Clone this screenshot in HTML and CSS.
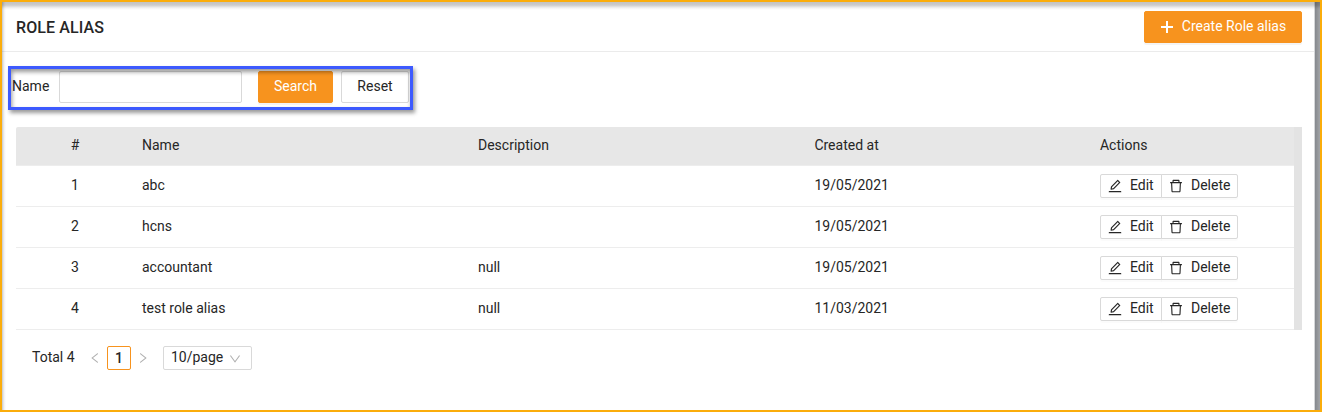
FILE: index.html
```html
<!DOCTYPE html>
<html lang="en">
<head>
<meta charset="utf-8">
<title>Role alias</title>
<link rel="stylesheet" href="styles.css">
</head>
<body>
<svg class="sprite" aria-hidden="true">
  <symbol id="edit" viewBox="64 64 896 896"><path d="M257.7 752c2 0 4-.2 6-.5L431.9 722c2-.4 3.9-1.3 5.3-2.8l423.9-423.9a9.96 9.96 0 0 0 0-14.1L694.9 114.9c-1.9-1.9-4.4-2.9-7.1-2.9s-5.2 1-7.1 2.9L256.8 538.8c-1.5 1.5-2.4 3.3-2.8 5.3l-29.5 168.2a33.5 33.5 0 0 0 9.4 29.8c6.6 6.4 14.9 9.9 23.8 9.9zm67.4-174.4L687.8 215l73.3 73.3-362.7 362.6-88.9 15.7 15.6-89zM880 836H144c-17.7 0-32 14.3-32 32v36c0 4.4 3.6 8 8 8h784c4.4 0 8-3.6 8-8v-36c0-17.7-14.3-32-32-32z"/></symbol>
  <symbol id="delete" viewBox="64 64 896 896"><path d="M360 184h-8c4.4 0 8-3.6 8-8v8h304v-8c0 4.4 3.6 8 8 8h-8v72h72v-80c0-35.3-28.7-64-64-64H352c-35.3 0-64 28.7-64 64v80h72v-72zm504 72H160c-17.7 0-32 14.3-32 32v32c0 4.4 3.6 8 8 8h60.4l24.7 523c1.6 34.1 29.8 61 63.9 61h454c34.2 0 62.3-26.8 63.9-61l24.7-523H888c4.4 0 8-3.6 8-8v-32c0-17.7-14.3-32-32-32zM731.3 840H292.7l-24.2-512h487l-24.2 512z"/></symbol>
  <symbol id="down" viewBox="64 64 896 896"><path d="M884 256h-75c-5.1 0-9.9 2.5-12.9 6.6L512 654.2 227.9 262.6c-3-4.1-7.8-6.6-12.9-6.6h-75c-6.5 0-10.3 7.4-6.5 12.7l352.6 486.1c12.8 17.6 39 17.6 51.7 0l352.6-486.1c3.9-5.3.1-12.7-6.4-12.7z"/></symbol>
  <symbol id="left" viewBox="64 64 896 896"><path d="M724 218.3V141c0-6.7-7.7-10.4-12.9-6.3L260.3 486.8a31.86 31.86 0 0 0 0 50.3l450.8 352.1c5.3 4.1 12.9.4 12.9-6.3v-77.3c0-4.9-2.3-9.6-6.1-12.6l-360-281 360-281.1c3.8-3 6.1-7.7 6.1-12.6z"/></symbol>
  <symbol id="plus" viewBox="0 0 14 14"><path d="M6 1h2v5h5v2H8v5H6V8H1V6h5z"/></symbol>
</svg>
<div class="frame">
  <header class="header">
    <h1 class="title">ROLE ALIAS</h1>
    <button class="btn primary create"><svg class="icon"><use href="#plus"/></svg>Create Role alias</button>
  </header>
  <form class="filter">
    <label class="label" for="name">Name</label>
    <input class="input" id="name" type="text">
    <button class="btn primary search" type="button">Search</button>
    <button class="btn reset" type="button">Reset</button>
  </form>
  <div class="table">
    <div class="rows">
      <div class="row head"><span class="num">#</span><span>Name</span><span>Description</span><span>Created at</span><span>Actions</span></div>
      <div class="row"><span class="num">1</span><span>abc</span><span></span><span>19/05/2021</span><div class="actions"><button class="act edit"><svg class="icon"><use href="#edit"/></svg>Edit</button><button class="act delete"><svg class="icon"><use href="#delete"/></svg>Delete</button></div></div>
      <div class="row"><span class="num">2</span><span>hcns</span><span></span><span>19/05/2021</span><div class="actions"><button class="act edit"><svg class="icon"><use href="#edit"/></svg>Edit</button><button class="act delete"><svg class="icon"><use href="#delete"/></svg>Delete</button></div></div>
      <div class="row"><span class="num">3</span><span>accountant</span><span>null</span><span>19/05/2021</span><div class="actions"><button class="act edit"><svg class="icon"><use href="#edit"/></svg>Edit</button><button class="act delete"><svg class="icon"><use href="#delete"/></svg>Delete</button></div></div>
      <div class="row"><span class="num">4</span><span>test role alias</span><span>null</span><span>11/03/2021</span><div class="actions"><button class="act edit"><svg class="icon"><use href="#edit"/></svg>Edit</button><button class="act delete"><svg class="icon"><use href="#delete"/></svg>Delete</button></div></div>
    </div>
    <div class="scrollbar"></div>
  </div>
  <footer class="pager">
    <span class="total">Total 4</span>
    <svg class="arrow"><use href="#left"/></svg>
    <span class="page">1</span>
    <svg class="arrow next"><use href="#left"/></svg>
    <div class="size"><span>10/page</span><svg class="chevron"><use href="#down"/></svg></div>
  </footer>
  <div class="edge"></div>
</div>
</body>
</html>
```
FILE: styles.css
```css
* { box-sizing: border-box; }
body {
  margin: 0;
  font: 14px/22px Roboto, "Liberation Sans", sans-serif;
  color: #262626;
  background: #fff;
}
button, input { font: inherit; color: inherit; }
.sprite { position: absolute; width: 0; height: 0; }
.frame {
  position: relative;
  height: 412px;
  border: 2px solid #fbad0b;
  overflow: hidden;
}
/* Shading along the frame and the page scrollbar lie over the content. */
.frame::after {
  content: "";
  position: absolute;
  inset: 0;
  background:
    linear-gradient(180deg, rgba(0, 0, 0, .24), rgba(0, 0, 0, .2) 3px, rgba(0, 0, 0, .05) 6px, transparent 8px),
    linear-gradient(90deg, rgba(0, 0, 0, .22), rgba(0, 0, 0, .06) 2px, transparent 4px);
  pointer-events: none;
}
.edge {
  position: absolute;
  top: 0;
  right: 0;
  bottom: 0;
  width: 6px;
  border-left: 1px solid #d5d7d9;
  background: linear-gradient(90deg, #85888d, #a2a4a7);
}
.header {
  display: flex;
  align-items: center;
  justify-content: space-between;
  height: 50px;
  padding: 0 18px 0 14px;
  border-bottom: 1px solid #ebebeb;
}
.title { margin: 2px 0 0; font-size: 16px; line-height: 24px; font-weight: 500; letter-spacing: .1px; }
.btn {
  display: flex;
  align-items: center;
  justify-content: center;
  height: 32px;
  padding: 0 0 2px;
  border: 1px solid #d9d9d9;
  border-radius: 2px;
  background: #fff;
}
.primary {
  border-color: #f7931e;
  background: #f7931e;
  color: #fff;
  box-shadow: 0 2px 0 rgba(0, 0, 0, .045);
}
.create { width: 158px; gap: 8px; }
.icon { width: 14px; height: 14px; fill: currentColor; flex: none; }
.create .icon { margin-top: 2px; }
.filter {
  position: relative;
  display: flex;
  align-items: center;
  width: 405px;
  height: 44px;
  margin: 14px 0 0 6px;
  padding: 0 0 2px 4px;
}
.filter::after {
  content: "";
  position: absolute;
  inset: 0;
  border: 3px solid #3d5afe;
  box-shadow: 2px 3px 4px rgba(0, 0, 0, .4);
  pointer-events: none;
}
.filter::before {
  content: "";
  position: absolute;
  inset: 3px;
  box-shadow: inset 1px 3px 4px rgba(0, 0, 0, .4);
  pointer-events: none;
}
.label { width: 47px; margin-top: -2px; }
.input {
  width: 183px;
  height: 32px;
  margin: 0 16px 0 0;
  padding: 0 11px;
  border: 1px solid #d9d9d9;
  border-radius: 2px;
  background: transparent;
}
.search { width: 75px; margin-right: 8px; }
.reset { width: 68px; }
.table { display: flex; width: 1286px; margin: 17px 0 0 14px; }
.rows { width: 1278px; }
.scrollbar { width: 8px; background: #e3e3e3; }
.row {
  display: grid;
  grid-template-columns: 126px 336px 336.4px 285.6px 1fr;
  align-items: center;
  height: 41px;
  padding-bottom: 3px;
  border-bottom: 1px solid #ededed;
}
.row.head { height: 39px; padding-bottom: 2px; background: #e7e7e7; border-radius: 2px 0 0; }
.num { width: 118px; text-align: center; }
.actions { display: flex; margin-top: 2px; }
.act {
  display: flex;
  align-items: center;
  height: 24px;
  padding: 0 7px 2px;
  gap: 8px;
  border: 1px solid #d9d9d9;
  background: #fff;
  box-shadow: 0 2px 0 rgba(0, 0, 0, .015);
}
.act .icon { margin-top: 2px; }
.edit { width: 62px; border-radius: 2px 0 0 2px; }
.delete { width: 77px; margin-left: -1px; border-radius: 0 2px 2px 0; }
.pager { display: flex; align-items: center; margin: 16px 0 0 30px; height: 24px; }
.total { width: 57px; margin-top: -2px; }
.arrow { width: 12px; height: 12px; fill: #b0b0b0; }
.next { transform: scaleX(-1); }
.page {
  width: 24px;
  height: 24px;
  margin: 0 6px;
  border: 1px solid #f7931e;
  border-radius: 2px;
  text-align: center;
  font-weight: 500;
}
.size {
  display: flex;
  align-items: center;
  width: 89px;
  height: 24px;
  margin-left: 14px;
  padding: 0 10px 2px 7px;
  justify-content: space-between;
  border: 1px solid #d9d9d9;
  border-radius: 2px;
}
.chevron { width: 12px; height: 12px; margin-top: 4px; fill: #b0b0b0; }
```
